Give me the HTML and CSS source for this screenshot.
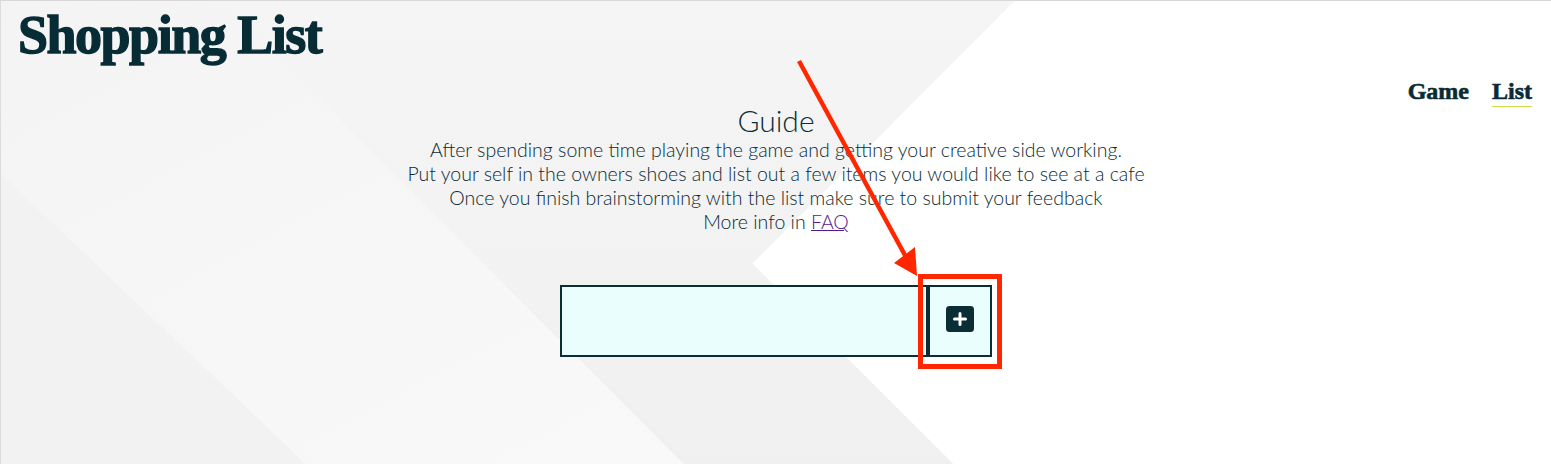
FILE: index.html
```html
<!DOCTYPE html>
<html lang="en">
<head>
<meta charset="utf-8">
<title>Shopping List</title>
<link rel="stylesheet" href="styles.css">
</head>
<body>
<div class="page">
  <header class="header">
    <h1 class="brand">Shopping List</h1>
    <nav class="nav">
      <a class="nav-link" href="#">Game</a>
      <a class="nav-link nav-link-active" href="#">List</a>
    </nav>
  </header>
  <main class="main">
    <h2 class="guide-title">Guide</h2>
    <p class="guide-text">After spending some time playing the game and getting your creative side working.<br>
    Put your self in the owners shoes and list out a few items you would like to see at a cafe<br>
    Once you finish brainstorming with the list make sure to submit your feedback<br>
    More info in <a class="faq-link" href="#">FAQ</a></p>
    <form class="add-form">
      <input class="add-input" type="text" aria-label="Item">
      <button class="add-button" type="button" aria-label="Add item">
        <svg class="plus-icon" width="28" height="26" viewBox="0 0 28 26">
          <rect x="0" y="0" width="28" height="26" rx="3.5" fill="#0a2d36"/>
          <path d="M14 7.5v11M8.5 13h11" stroke="#ffffff" stroke-width="3" stroke-linecap="round"/>
        </svg>
      </button>
    </form>
  </main>
</div>
<svg class="annotation" width="1551" height="464" viewBox="0 0 1551 464">
  <line x1="799" y1="61" x2="906" y2="257" stroke="#ff2600" stroke-width="4.5"/>
  <polygon points="917,276 894,263 915,247" fill="#ff2600"/>
  <rect x="920.5" y="276.5" width="79" height="90" fill="none" stroke="#ff2600" stroke-width="5"/>
</svg>
</body>
</html>
```

FILE: styles.css
```css
html, body {
  margin: 0;
  padding: 0;
}

body {
  width: 1551px;
  height: 464px;
  overflow: hidden;
  font-family: "Lato", "Open Sans", sans-serif;
  color: #0b2e37;
}

.page {
  box-sizing: border-box;
  width: 1551px;
  height: 464px;
  border-top: 1px solid #d8d8d8;
  border-left: 1px solid #dcdcdc;
  background-color: #f2f2f2;
  background-image: url("data:image/svg+xml,%3Csvg xmlns='http://www.w3.org/2000/svg' viewBox='0 0 1551 464' preserveAspectRatio='none'%3E%3Cdefs%3E%3ClinearGradient id='g' x1='0' y1='0' x2='0' y2='1'%3E%3Cstop offset='0' stop-color='%23f5f5f5'/%3E%3Cstop offset='1' stop-color='%23f0f0f0'/%3E%3C/linearGradient%3E%3ClinearGradient id='h' x1='0' y1='0' x2='1' y2='1'%3E%3Cstop offset='0' stop-color='%23f3f3f3'/%3E%3Cstop offset='1' stop-color='%23f9f9f9'/%3E%3C/linearGradient%3E%3C/defs%3E%3Crect width='1551' height='464' fill='%23f2f2f2'/%3E%3Cpolygon points='-182,0 221,0 683,464 305,464' fill='url(%23h)'/%3E%3Cpolygon points='221,0 1014,0 752,263 953,464 683,464' fill='url(%23g)'/%3E%3Cpolygon points='1014,0 1551,0 1551,464 953,464 752,263' fill='%23ffffff'/%3E%3C/svg%3E");
  background-size: 100% 100%;
  background-repeat: no-repeat;
}

.header {
  display: flex;
  justify-content: space-between;
  align-items: flex-start;
  height: 106px;
}

.brand {
  margin: 4px 0 0 17px;
  font-family: "Liberation Serif", "Times New Roman", serif;
  font-weight: 700;
  font-size: 54px;
  line-height: 60px;
  letter-spacing: -1.5px;
  color: #072c36;
  -webkit-text-stroke: 1.4px #072c36;
}

.nav {
  display: flex;
  gap: 23px;
  margin-top: 76px;
  margin-right: 19px;
}

.nav-link {
  font-family: "Liberation Serif", "Times New Roman", serif;
  font-weight: 700;
  font-size: 24px;
  line-height: 28px;
  color: #072c36;
  text-decoration: none;
  -webkit-text-stroke: 0.6px #072c36;
  padding-bottom: 1px;
  border-bottom: 1px solid transparent;
}

.nav-link-active {
  border-bottom-color: #cbdd47;
}

.main {
  display: flex;
  flex-direction: column;
  align-items: center;
  margin-top: -5px;
}

.guide-title {
  margin: 0;
  font-weight: 300;
  font-size: 30px;
  line-height: 36px;
  color: #0b2e37;
}

.guide-text {
  margin: 0;
  font-weight: 300;
  font-size: 19.5px;
  line-height: 24px;
  text-align: center;
  color: #0a2a33;
}

.faq-link {
  color: #551a8b;
  text-decoration: underline;
}

.add-form {
  display: flex;
  margin-top: 51px;
  height: 72px;
}

.add-input {
  box-sizing: border-box;
  width: 368px;
  height: 72px;
  margin: 0;
  border: 2px solid #0a2d36;
  background: #ebfefe;
  font-family: "Lato", sans-serif;
  font-size: 18px;
  padding: 0 10px;
  outline: none;
}

.add-button {
  box-sizing: border-box;
  width: 64px;
  height: 72px;
  margin: 0;
  padding: 0;
  border: 2px solid #0a2d36;
  background: #ebfefe;
  display: flex;
  align-items: center;
  justify-content: center;
}

.plus-icon {
  display: block;
  margin-top: -4px;
}

.annotation {
  position: absolute;
  top: 0;
  left: 0;
  pointer-events: none;
}
```
